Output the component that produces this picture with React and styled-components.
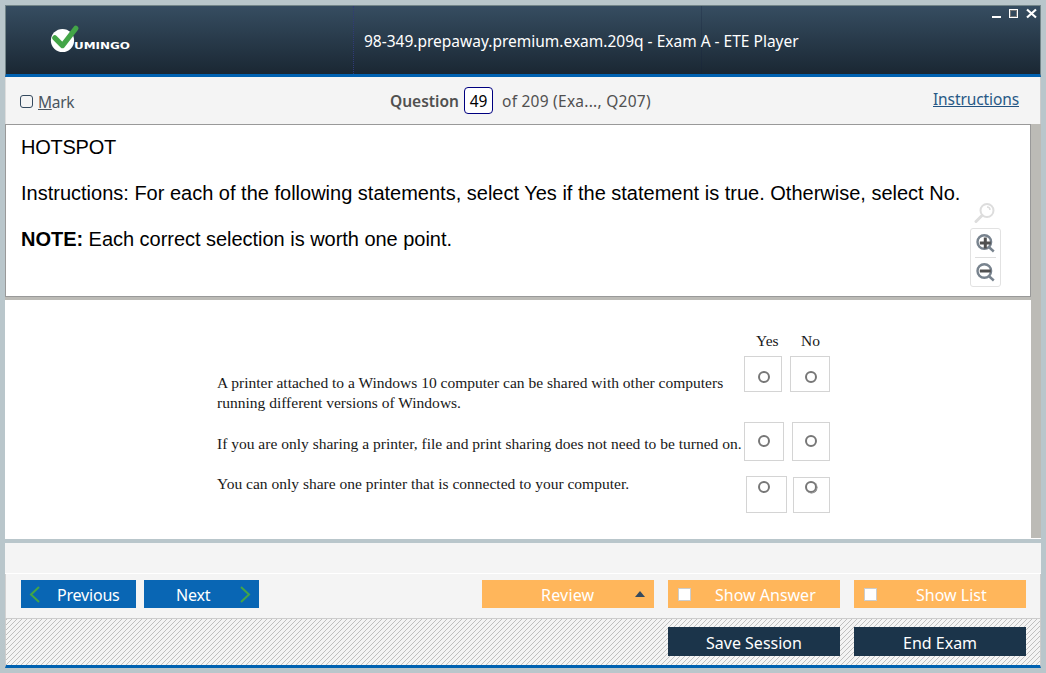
import React from "react";
import styled, { createGlobalStyle } from "styled-components";

const ui = `"Noto Sans", "Open Sans", sans-serif`;

const GlobalStyle = createGlobalStyle`
  * { box-sizing: border-box; }
  body { margin: 0; background: #b9c6cb; }
`;

const Frame = styled.div`
  width: 1046px;
  height: 673px;
  padding: 5px;
  background: #b9c6cb;
  font-family: ${ui};
  white-space: nowrap;
`;

const Header = styled.header`
  position: relative;
  width: 1036px;
  height: 72px;
  display: flex;
  border: 1px solid #738589;
  border-bottom: 3px solid #0061b1;
  background: linear-gradient(#364d61, #1a2733);
`;

const LogoArea = styled.div`
  width: 348px;
  padding: 19px 0 0 44px;
  border-right: 1px dotted #303a78;
`;

const TitleArea = styled.h1`
  width: 348px;
  margin: 0;
  padding: 24px 0 0 10px;
  border-right: 1px solid rgba(20, 30, 60, 0.25);
  color: #fff;
  font-size: 15.5px;
  line-height: 22px;
  font-weight: 400;
  letter-spacing: ${(p) => p.$spacing}px;
`;

const WindowControls = styled.div`
  position: absolute;
  top: 2px;
  right: 2px;
  line-height: 0;
`;

const Toolbar = styled.div`
  width: 1036px;
  height: 47px;
  display: grid;
  grid-template-columns: 370px 1fr auto;
  padding: 0 21px 0 14px;
  border-left: 1px solid #ddd;
  border-right: 1px solid #ccc;
  background: #f4f4f4;
  color: #505050;
  font-size: 15.5px;
`;

const MarkOption = styled.label`
  display: flex;
  padding-top: 14px;
  gap: 5px;
  line-height: 22px;
  color: #4a555f;
  letter-spacing: ${(p) => p.$spacing}px;
`;

const MarkBox = styled.span`
  width: 13px;
  height: 13px;
  margin-top: 4px;
  border: 1px solid #34495e;
  border-radius: 3px;
`;

const QuestionStatus = styled.div`
  display: flex;
  padding-top: 10px;
  line-height: 28px;
`;

const StatusText = styled.span`
  width: ${(p) => p.$width}px;
  font-weight: ${(p) => (p.$bold ? 600 : 400)};
  letter-spacing: ${(p) => p.$spacing}px;
`;

const QuestionNumber = styled.span`
  width: 29px;
  height: 27px;
  margin-right: 9px;
  border: 1px solid #000080;
  border-radius: 4px;
  background: #fff;
  color: #000;
  line-height: 27px;
  text-align: center;
`;

const InstructionsLink = styled.a`
  align-self: start;
  height: 18px;
  margin-top: 12px;
  border-bottom: 1px solid #225382;
  color: #285986;
  font-size: 15.5px;
  line-height: 21px;
  letter-spacing: ${(p) => p.$spacing}px;
`;

const Content = styled.main`
  width: 1036px;
  height: 415px;
  padding-right: 10px;
  border-bottom: 1px solid #fff;
  background: #bcbbb6;
`;

const QuestionPanel = styled.section`
  height: 173px;
  display: flex;
  justify-content: space-between;
  padding: 0 29px 0 15px;
  border: 1px solid #999;
  background: #fff;
  color: #000;
  font-family: "Liberation Sans", Arial, sans-serif;
  font-size: 20px;
`;

const QuestionText = styled.div`
  padding-top: 11px;
`;

const Paragraph = styled.p`
  height: 23px;
  margin: 0 0 23px;
  line-height: 23px;
  letter-spacing: ${(p) => p.$spacing}px;
`;

const ZoomTools = styled.div`
  width: 31px;
  flex: none;
  margin-left: -30px;
  padding-top: 76px;
`;

const LoupeSlot = styled.div`
  height: 27px;
  padding: 1px 0 0 4px;
`;

const ZoomButtons = styled.div`
  height: 59px;
  padding: 5px 4px;
  border: 1px solid #e2e2e2;
  border-radius: 3px;
`;

const ZoomButton = styled.div`
  height: ${(p) => p.$height}px;
  padding-top: ${(p) => p.$top}px;
  border-bottom: ${(p) => (p.$divided ? "1px solid #ddd" : "0")};
  line-height: 0;
`;

const AnswerPanel = styled.section`
  height: 239px;
  margin-top: 3px;
  padding: 31px 0 0 212px;
  background: #fff;
  color: #181818;
  font-family: "Liberation Serif", "Times New Roman", serif;
  font-size: 15.52px;
`;

const ColumnHeads = styled.div`
  height: 25px;
  display: grid;
  grid-template-columns: 45px 30px;
  padding-left: 539px;
  line-height: 20px;
`;

const AnswerRow = styled.div`
  height: ${(p) => p.$height}px;
  display: flex;
  align-items: flex-start;
`;

const Statement = styled.div`
  width: ${(p) => p.$width}px;
  margin-top: ${(p) => p.$top}px;
  line-height: 20px;
`;

const Choice = styled.div`
  width: ${(p) => p.$width}px;
  height: ${(p) => p.$height}px;
  margin: ${(p) => p.$drop || 0}px ${(p) => p.$gap || 0}px 0 0;
  padding: ${(p) => p.$py}px 0 0 ${(p) => p.$px}px;
  border: 1px solid #d4d4d4;
`;

const Radio = styled.div`
  width: 12px;
  height: 12px;
  border: 2px solid #777;
  border-radius: 50%;
  box-shadow: ${(p) => (p.$heavy ? "0.5px 0.5px 0 #777" : "none")};
`;

const StatusStrip = styled.div`
  width: 1036px;
  height: 35px;
  border-top: 4px solid #b9c6cb;
  border-bottom: 1px solid #fff;
  background: #f4f4f4;
`;

const NavigationBar = styled.nav`
  width: 1036px;
  height: 44px;
  display: flex;
  padding: 6px 14px 0 15px;
  border-left: 1px solid #d2d2d2;
  border-right: 1px solid #ccc;
  background: #f4f4f4;
`;

const SessionBar = styled.div`
  width: 1036px;
  height: 50px;
  display: flex;
  justify-content: flex-end;
  gap: 14px;
  padding: 8px 14px 0;
  border: 1px solid #ccc;
  border-bottom: 3px solid #0061b1;
  background: repeating-linear-gradient(135deg, #f4f4f4 0 0.35px, #c0c0c0 0.35px 1.06px, #f4f4f4 1.06px 3.5355px);
`;

const Button = styled.button`
  position: relative;
  width: ${(p) => p.$width}px;
  height: ${(p) => p.$height || 28}px;
  margin: 0 ${(p) => p.$after || 0}px 0 0;
  padding: 0 0 0 ${(p) => p.$indent}px;
  border: 0;
  background: ${(p) => p.$color};
  color: #fff;
  font-family: ${ui};
  font-size: 16px;
  text-align: left;
  white-space: nowrap;
  letter-spacing: ${(p) => p.$spacing || 0}px;
`;

const Label = styled.span`
  display: block;
  height: 28px;
  padding-top: 1px;
  line-height: 28px;
`;

const ButtonMark = styled.span`
  position: absolute;
  left: ${(p) => p.$left}px;
  top: ${(p) => p.$top}px;
  line-height: 0;
`;

const CheckSquare = styled.span`
  display: block;
  width: 13px;
  height: 13px;
  border: 1px solid #ccc;
  background: #fff;
`;

const Logo = () => (
  <svg width="84" height="34" viewBox="50 25 84 34">
    <circle cx="62.5" cy="40.5" r="11.6" fill="#fff" />
    <path d="M54.8 37.8L62.5 45.6L75.8 28.3" fill="none" stroke="#43a547" strokeWidth="5.2" strokeLinecap="round" strokeLinejoin="round" />
    <text x="74" y="49" fill="#fff" fontFamily="DejaVu Sans" fontWeight="700" fontSize="9" textLength="56" lengthAdjust="spacingAndGlyphs">UMINGO</text>
  </svg>
);

const Chevron = ({ right }) => (
  <svg width="11" height="17" viewBox="0 0 11 17" fill="none" stroke="#43a547" strokeWidth="2">
    <path d={right ? "M1 1L9 8.5L1 16" : "M10 1L2 8.5L10 16"} />
  </svg>
);

const Magnifier = ({ plus }) => (
  <svg width="20" height="19" viewBox="-0.8 0 20 19" fill="none">
    <circle cx="8.5" cy="8" r="6.8" stroke="#78838e" strokeWidth="2.4" />
    <path d="M13 13L18 17.5" stroke="#78838e" strokeWidth="2.5" />
    <path d={plus ? "M4 9H15M9.5 3.5V14.5" : "M4 8H15"} stroke="#505050" strokeWidth="3" />
  </svg>
);

const blue = "#0966b4";
const orange = "#ffb65b";
const navy = "#1b344a";

export default function App() {
  return (
    <Frame>
      <GlobalStyle />
      <Header>
        <LogoArea><Logo /></LogoArea>
        <TitleArea $spacing={0}>98-349.prepaway.premium.exam.209q - Exam A - ETE Player</TitleArea>
        <WindowControls>
          <svg width="46" height="12" viewBox="0 0 46 12" fill="none">
            <path d="M0 9H9" stroke="#fff" strokeWidth="2" />
            <rect x="17.5" y="1.5" width="8" height="8" stroke="#fff" />
            <rect x="18.5" y="2.5" width="6" height="6" stroke="#777" />
            <path d="M35 1.5L44 9.5M44 1.5L35 9.5" stroke="#fff" strokeWidth="2.2" />
          </svg>
        </WindowControls>
      </Header>
      <Toolbar>
        <MarkOption $spacing={-0.3}><MarkBox /><span><u>M</u>ark</span></MarkOption>
        <QuestionStatus>
          <StatusText $width={74} $bold $spacing={0}>Question</StatusText>
          <QuestionNumber>49</QuestionNumber>
          <StatusText $width={160} $spacing={0.25}>of 209 (Exa..., Q207)</StatusText>
        </QuestionStatus>
        <InstructionsLink $spacing={-0.1}>Instructions</InstructionsLink>
      </Toolbar>
      <Content>
        <QuestionPanel>
          <QuestionText>
            <Paragraph $spacing={-0.25}>HOTSPOT</Paragraph>
            <Paragraph $spacing={0}>Instructions: For each of the following statements, select Yes if the statement is true. Otherwise, select No.</Paragraph>
            <Paragraph $spacing={-0.03}><b>NOTE:</b> Each correct selection is worth one point.</Paragraph>
          </QuestionText>
          <ZoomTools>
            <LoupeSlot>
              <svg width="21" height="22" viewBox="0 0 21 22" fill="none" stroke="#ddd">
                <circle cx="13" cy="8.5" r="6.5" strokeWidth="2" />
                <path d="M8 13.5L2 19.5" strokeWidth="3" strokeLinecap="round" />
                <path d="M13 5Q16 5 16 8" strokeWidth="1.5" />
              </svg>
            </LoupeSlot>
            <ZoomButtons>
              <ZoomButton $height={24} $top={0} $divided><Magnifier plus /></ZoomButton>
              <ZoomButton $height={24} $top={5}><Magnifier /></ZoomButton>
            </ZoomButtons>
          </ZoomTools>
        </QuestionPanel>
        <AnswerPanel>
          <ColumnHeads><span>Yes</span><span>No</span></ColumnHeads>
          <AnswerRow $height={66}>
            <Statement $width={527} $top={17}>
              <div>A printer attached to a Windows 10 computer can be shared with other computers</div>
              <div>running different versions of Windows.</div>
            </Statement>
            <Choice $width={38} $height={36} $px={13} $py={14} $gap={8}><Radio /></Choice>
            <Choice $width={40} $height={36} $px={14} $py={14}><Radio /></Choice>
          </AnswerRow>
          <AnswerRow $height={54}>
            <Statement $width={527} $top={12}>
              If you are only sharing a printer, file and print sharing does not need to be turned on.
            </Statement>
            <Choice $width={40} $height={39} $px={13} $py={12} $gap={8}><Radio /></Choice>
            <Choice $width={38} $height={39} $px={12} $py={12}><Radio /></Choice>
          </AnswerRow>
          <AnswerRow $height={40}>
            <Statement $width={529} $top={-2}>
              You can only share one printer that is connected to your computer.
            </Statement>
            <Choice $width={41} $height={37} $px={11} $py={4} $gap={6}><Radio /></Choice>
            <Choice $width={37} $height={36} $px={11} $py={3} $drop={1}><Radio $heavy /></Choice>
          </AnswerRow>
        </AnswerPanel>
      </Content>
      <StatusStrip />
      <NavigationBar>
        <Button $color={blue} $width={115} $indent={36} $after={8} $spacing={-0.2}>
          <ButtonMark $left={8} $top={6}><Chevron /></ButtonMark>
          <Label>Previous</Label>
        </Button>
        <Button $color={blue} $width={115} $indent={32} $after={223} $spacing={-0.2}>
          <Label>Next</Label>
          <ButtonMark $left={96} $top={6}><Chevron right /></ButtonMark>
        </Button>
        <Button $color={orange} $width={172} $indent={59} $after={14} $spacing={0.2}>
          <Label>Review</Label>
          <ButtonMark $left={153} $top={11}><svg width="10" height="6"><path d="M0 6L5 0L10 6Z" fill="#34495e" /></svg></ButtonMark>
        </Button>
        <Button $color={orange} $width={172} $indent={47} $after={14}>
          <ButtonMark $left={10} $top={8}><CheckSquare /></ButtonMark>
          <Label>Show Answer</Label>
        </Button>
        <Button $color={orange} $width={172} $indent={62}>
          <ButtonMark $left={10} $top={8}><CheckSquare /></ButtonMark>
          <Label>Show List</Label>
        </Button>
      </NavigationBar>
      <SessionBar>
        <Button $color={navy} $width={172} $height={29} $indent={38}><Label>Save Session</Label></Button>
        <Button $color={navy} $width={172} $height={29} $indent={49}><Label>End Exam</Label></Button>
      </SessionBar>
    </Frame>
  );
}
